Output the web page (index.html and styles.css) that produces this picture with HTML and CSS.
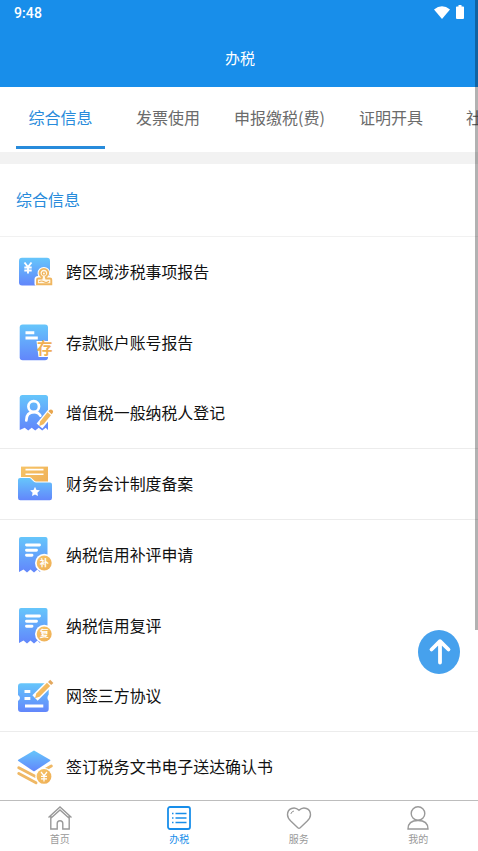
FILE: index.html
```html
<!DOCTYPE html>
<html lang="zh-CN">
<head>
<meta charset="utf-8">
<title>办税</title>
<link rel="stylesheet" href="styles.css">
</head>
<body>
<svg class="defs" width="0" height="0" aria-hidden="true">
  <defs>
    <linearGradient id="blue" x1="0" y1="0" x2="0" y2="1"><stop offset="0" stop-color="#66c6fb"/><stop offset="1" stop-color="#6286fb"/></linearGradient>
    <linearGradient id="gold" x1="0" y1="0" x2="1" y2="1"><stop offset="0" stop-color="#f7c467"/><stop offset="1" stop-color="#eeae55"/></linearGradient>
    <g id="receipt">
      <path d="M5 1H29.500a2 2 0 0 1 2 2V24L24 36l-2.500-2.400-3.500 2.800-3.500-2.800-3.500 2.800-3.500-2.800L3 36V3a2 2 0 0 1 2-2z" fill="url(#blue)"/>
      <path d="M10.500 9H23.500M10.500 14.300H20.500M10.500 19.300H16" stroke="#fff" stroke-width="2.900" stroke-linecap="round"/>
      <circle cx="28.200" cy="27" r="9.200" fill="#fff"/><circle cx="28.200" cy="27" r="7.500" fill="url(#gold)"/>
    </g>
  </defs>
</svg>
<div class="screen">
  <header class="header">
    <div class="status">
      <span class="time">9:48</span>
      <svg class="wifi" viewBox="0 0 16 13"><path d="M0 3.500Q8-3 16 3.500L8 13z" fill="#fff"/></svg>
      <svg class="battery" viewBox="0 0 8 14"><path d="M2.500 0h3v1.500H7.200a.8.8 0 0 1 .8.8V13a1 1 0 0 1-1 1H1a1 1 0 0 1-1-1V2.300a.8.8 0 0 1 .8-.8H2.500z" fill="#fff"/></svg>
    </div>
    <h1 class="title">办税</h1>
  </header>
  <nav class="tabs">
    <a class="tab active">综合信息</a><a class="tab second">发票使用</a><a class="tab third">申报缴税(费)</a><a class="tab fourth">证明开具</a><a class="tab fifth">社保</a>
  </nav>
  <main class="content">
    <h2 class="section">综合信息</h2>
    <ul class="list">
      <li class="row">
        <svg class="icon" viewBox="0 0 38 38"><rect x="3" y="4.700" width="31" height="27.800" rx="3" fill="url(#blue)"/><path d="M8.500 9.500 12 14l3.500-4.500M12 14v6.500M8.300 14.500h7.400M8.300 17.500h7.400" fill="none" stroke="#fff" stroke-width="1.900"/><path d="M25 23.400a4.300 4.300 0 1 1 5.700 0V25H34a1.500 1.500 0 0 1 1.500 1.500V31h-15v-4.500A1.500 1.500 0 0 1 22 25h3z" fill="#fff" stroke="#fff" stroke-width="4" stroke-linejoin="round"/><path d="M26 24a4.300 4.300 0 1 1 3.800 0l.4 1.500H34a1.300 1.300 0 0 1 1.300 1.300V31.300H21v-4.500a1.300 1.300 0 0 1 1.300-1.300h3.300z" fill="#fff8e9" stroke="#f0b660" stroke-width="1.900"/><circle cx="27.900" cy="20.400" r="1.600" fill="none" stroke="#efb25a" stroke-width="1.200"/><path d="M23 28.800q2.500-1.500 5 0t5-.5" fill="none" stroke="#efb25a" stroke-width="1.100"/></svg>
        <span>跨区域涉税事项报告</span></li>
      <li class="row">
        <svg class="icon" viewBox="0 0 38 38"><rect x="3.700" y=".5" width="28.300" height="35.700" rx="3" fill="url(#blue)"/><path d="M9.500 8.700h8.800M9.500 14h12.300" stroke="#fff" stroke-width="2.900"/><path d="M20.500 17H37v16H22.500z" fill="#fff"/><text x="28.800" y="29.800" class="stamp">存</text></svg>
        <span>存款账户账号报告</span></li>
      <li class="row line">
        <svg class="icon" viewBox="0 0 38 38"><path d="M6 1H29.500a2.500 2.500 0 0 1 2.500 2.500V36l-2.300-2.300-3.500 2.700-3.500-2.700-3.500 2.700-3.500-2.700-3.500 2.700-3.500-2.700L3.700 36V3.500A2.500 2.500 0 0 1 6 1z" fill="url(#blue)"/><circle cx="17.700" cy="12.500" r="5.300" fill="none" stroke="#fff" stroke-width="2.700"/><path d="M10.300 26.500q0-8.300 7.700-8.300 4.500 0 6.300 3.500" fill="none" stroke="#fff" stroke-width="2.700" stroke-linecap="round"/><path d="M23.500 32 35.500 17.500" stroke="#fff" stroke-width="7.500"/><path d="M23.300 32l.8-4.600L31.500 18.300l3.500 2.900-7.500 9z" fill="url(#gold)"/><path d="M32.300 17.300l1.200-1.300a2.200 2.200 0 0 1 3.300 2.800l-1.100 1.400z" fill="#e9a64d"/></svg>
        <span>增值税一般纳税人登记</span></li>
      <li class="row line">
        <svg class="icon" viewBox="0 0 38 38"><path d="M5 1.600H32V22H5z" fill="url(#gold)"/><path d="M9.500 4.600H27.500M9.500 9.200H27.500" stroke="#fff" stroke-width="1.600"/><path d="M4 13h9.500c2 0 3.500 4.500 6.500 4.500h14a2 2 0 0 1 2 2V33a2.300 2.300 0 0 1-2.300 2.300H4.300A2.300 2.300 0 0 1 2 33V15a2 2 0 0 1 2-2z" fill="#fff" stroke="#fff" stroke-width="2"/><path d="M4 13h9.500c2 0 3.500 4.500 6.500 4.500h14a2 2 0 0 1 2 2V33a2.300 2.300 0 0 1-2.300 2.300H4.300A2.300 2.300 0 0 1 2 33V15a2 2 0 0 1 2-2z" fill="url(#blue)"/><path d="M19 21.800l1.500 3.100 3.400.4-2.500 2.400.6 3.400-3-1.700-3 1.700.6-3.400-2.500-2.400 3.400-.4z" fill="#fff"/></svg>
        <span>财务会计制度备案</span></li>
      <li class="row">
        <svg class="icon" viewBox="0 0 38 38"><use href="#receipt"/><text x="28.200" y="30.300" class="badge">补</text></svg>
        <span>纳税信用补评申请</span></li>
      <li class="row">
        <svg class="icon" viewBox="0 0 38 38"><use href="#receipt"/><text x="28.200" y="30.300" class="badge">复</text></svg>
        <span>纳税信用复评</span></li>
      <li class="row line">
        <svg class="icon" viewBox="0 0 38 38"><path d="M5 6.200H29.700a3 3 0 0 1 3 3V17.500q-2.500 3.500 0 6.500V32a3 3 0 0 1-3 3H5a3 3 0 0 1-3-3V24q4-3 0-6V9.200a3 3 0 0 1 3-3z" fill="url(#blue)"/><path d="M8.500 14.500h5.800M8.500 21.500h5.800M9 29H27.300" stroke="#fff" stroke-width="2.900"/><path d="M19 21 35 5" stroke="#fff" stroke-width="7.500"/><path d="M19 21.200l1.300-4.700L31 5.800l3.200 3.200L23.500 19.700z" fill="url(#gold)"/><path d="M32 4.900l2.200-2.200 3.200 3.200L35.200 8.100z" fill="#e3a85e"/></svg>
        <span>网签三方协议</span></li>
      <li class="row">
        <svg class="icon" viewBox="0 0 38 38"><path d="M2.800 18.700 19 27.300M2.800 24.500 20 33.700M25 23l10.300-6" stroke="#efb865" stroke-width="3" stroke-linecap="round"/><path d="M18 1.400 34 10.800q.8.600 0 1.200L18.800 22q-.8.500-1.600 0L2.300 12q-.8-.6 0-1.200z" fill="url(#blue)"/><circle cx="28" cy="27.400" r="8.700" fill="#fff"/><circle cx="28" cy="27.400" r="7.400" fill="url(#gold)"/><path d="M25 23l3 3.700 3-3.700M28 26.700v5.800M25 27.300h6M25 29.800h6" fill="none" stroke="#fff" stroke-width="1.200"/></svg>
        <span>签订税务文书电子送达确认书</span></li>
    </ul>
  </main>
  <nav class="bottom">
    <a class="item"><svg viewBox="0 0 26 26"><path d="M1.500 12.500 13 2l11.500 10.500M3.800 10.500V24h6.400v-5.500a2.800 2.800 0 0 1 5.600 0V24h6.400V10.500M3.800 13.200 13 5l9.200 8.200"/></svg><span>首页</span></a>
    <a class="item current"><svg viewBox="0 0 26 26"><rect x="2" y="2" width="22" height="22" rx="2" stroke-width="1.800"/><path d="M9.500 8.500h11M9.500 13h11M9.500 17.500h11M6 8.500h1.500M6 13h1.500M6 17.500h1.500"/></svg><span>办税</span></a>
    <a class="item"><svg viewBox="0 0 26 26"><path d="M13 5.300C8.500.8 1.500 3.500 1.500 9.700c0 3 1.700 4.800 3.500 6.600l6.800 6.500q1.200 1 2.400 0L21 16.300c1.800-1.800 3.500-3.600 3.500-6.600C24.500 3.500 17.500.8 13 5.300z"/><path d="M4.800 9Q5.300 6.500 8 6" stroke-width="1"/></svg><span>服务</span></a>
    <a class="item"><svg viewBox="0 0 26 26"><circle cx="13" cy="8.500" r="6.800"/><path d="M3 24q0-8.500 10-8.500T23 24z"/></svg><span>我的</span></a>
  </nav>
  <a class="totop" aria-label="top"><svg viewBox="0 0 42 44"><path d="M22 32.500V12M13.500 19.500 22 11.200l8.500 8.300" fill="none" stroke="#fff" stroke-width="3.800" stroke-linecap="round" stroke-linejoin="round"/></svg></a>
  <div class="scrollbar"></div>
</div>
</body>
</html>
```
FILE: styles.css
```css
* { box-sizing: border-box; }
body, h1, h2, ul { margin: 0; padding: 0; }
body { font-family: "Noto Sans CJK SC", sans-serif; color: #111; background: #fff; overflow: hidden; }
.defs { position: absolute; }
.screen { position: relative; width: 478px; height: 851px; display: flex; flex-direction: column; overflow: hidden; }
.header { height: 87px; flex: none; background: #188eea; color: #fff; }
.status { height: 24px; display: flex; align-items: center; padding: 0 14px; }
.time { flex: 1; font: 500 14px/24px Roboto, sans-serif; letter-spacing: .1px; padding-top: 1px; }
.wifi { width: 16px; height: 13px; margin-right: 6px; }
.battery { width: 8px; height: 14px; }
.title { font-size: 15px; font-weight: 400; line-height: 22px; text-align: center; margin-top: 23px; padding-left: 2px; }
.tabs { height: 65px; flex: none; display: flex; padding-left: 16px; overflow: hidden; font-size: 16px; color: #6b6b6b; white-space: nowrap; }
.tab { flex: none; height: 62px; line-height: 61px; text-align: center; }
.active { width: 89px; color: #288bdb; border-bottom: 3px solid #288bdb; }
.second { width: 64px; margin-left: 31px; }
.third { margin-left: 34px; width: 91px; }
.fourth { margin-left: 34px; width: 64px; }
.fifth { margin-left: 43px; }
.content { flex: 1; min-height: 0; overflow: hidden; border-top: 12px solid #f2f2f2; }
.section { height: 73px; line-height: 71px; padding-left: 16px; font-size: 16px; font-weight: 400; color: #288bdb; border-bottom: 1px solid #f1f1f1; }
.list { list-style: none; }
.row { height: 70.75px; display: flex; align-items: center; padding-left: 16px; gap: 12px; font-size: 15.92px; line-height: 24px; }
.row span { padding-bottom: 1px; }
.line { border-bottom: 1px solid #ececec; }
.icon { width: 38px; height: 38px; flex: none; }
.stamp { font-size: 15.5px; font-weight: 700; fill: #f0b053; text-anchor: middle; }
.badge { font-size: 9px; font-weight: 700; fill: #fff; text-anchor: middle; }
.bottom { height: 51px; flex: none; display: flex; border-top: 1px solid #bdbdbd; background: #fff; }
.item { flex: 1; display: flex; flex-direction: column; align-items: center; padding-top: 4px; font-size: 10px; line-height: 14px; color: #999; }
.item svg { width: 26px; height: 26px; margin-bottom: 1px; fill: none; stroke: #999; stroke-width: 1.4; }
.item.current { color: #188eea; }
.item.current svg { stroke: #188eea; }
.totop { position: absolute; left: 418px; top: 630px; width: 42px; height: 44px; border-radius: 50%; background: #46a1ed; }
.totop svg { display: block; width: 42px; height: 44px; }
.scrollbar { position: absolute; right: 0; top: 0; width: 3px; height: 630px; background: rgba(0, 0, 0, .3); }
```
